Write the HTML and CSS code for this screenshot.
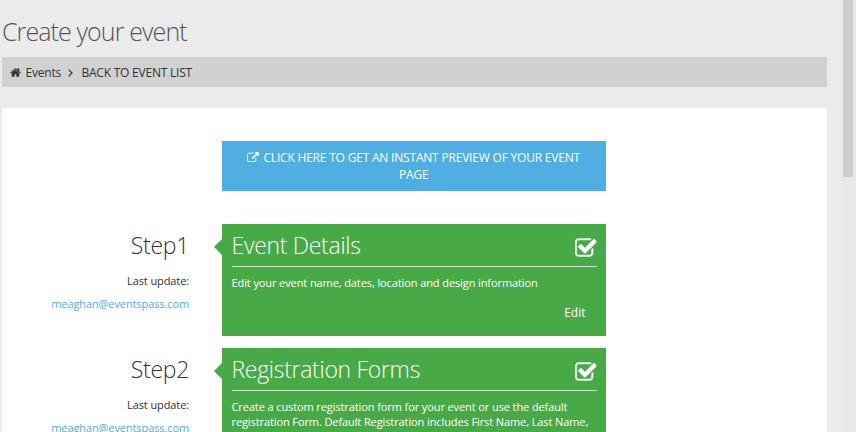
FILE: index.html
```html
<!DOCTYPE html>
<html lang="en">
<head>
<meta charset="utf-8">
<title>Create your event</title>
<link rel="stylesheet" href="styles.css">
</head>
<body>
<svg class="sprite" aria-hidden="true">
  <symbol id="home" viewBox="64 256 1664 1280"><path d="M1472 992v480q0 26-19 45t-45 19h-384v-384h-256v384h-384q-26 0-45-19t-19-45v-480q0-1 .5-3t.5-3l575-474 575 474q1 2 1 6zm223-69l-62 74q-8 9-21 11h-3q-13 0-21-7l-692-577-692 577q-12 8-24 7-13-2-21-11l-62-74q-8-10-7-23.5t11-21.5l719-599q32-26 76-26t76 26l244 204v-195q0-14 9-23t23-9h192q14 0 23 9t9 23v408l219 182q10 8 11 21.5t-7 23.5z"/></symbol>
  <symbol id="external" viewBox="0 0 1792 1536"><path d="M1408 928v320q0 119-84.500 203.500t-203.500 84.500h-832q-119 0-203.500-84.500t-84.500-203.500v-832q0-119 84.500-203.500t203.500-84.500h704q14 0 23 9t9 23v64q0 14-9 23t-23 9h-704q-66 0-113 47t-47 113v832q0 66 47 113t113 47h832q66 0 113-47t47-113v-320q0-14 9-23t23-9h64q14 0 23 9t9 23zm384-864v512q0 26-19 45t-45 19-45-19l-176-176-652 652q-10 10-23 10t-23-10l-114-114q-10-10-10-23t10-23l652-652-176-176q-19-19-19-45t19-45 45-19h512q26 0 45 19t19 45z"/></symbol>
  <symbol id="check" viewBox="64 128 1664 1408"><path d="M1472 930v318q0 119-84.500 203.500t-203.500 84.500h-832q-119 0-203.500-84.500t-84.500-203.500v-832q0-119 84.500-203.500t203.500-84.500h832q63 0 117 25 15 7 18 23 3 17-9 29l-49 49q-10 10-23 10-3 0-9-2-23-6-45-6h-832q-66 0-113 47t-47 113v832q0 66 47 113t113 47h832q66 0 113-47t47-113v-254q0-13 9-22l64-64q10-10 23-10 6 0 12 3 20 8 20 29zm231-489l-814 814q-24 24-57 24t-57-24l-430-430q-24-24-24-57t24-57l110-110q24-24 57-24t57 24l263 263 647-647q24-24 57-24t57 24l110 110q24 24 24 57t-24 57z"/></symbol>
</svg>
<div class="page">
  <main class="main">
    <h1 class="title">Create your event</h1>
    <nav class="crumbs">
      <svg class="home"><use href="#home"/></svg>
      <a class="crumb">Events</a>
      <svg class="angle" viewBox="0 0 5 8"><path d="M.7.7 4 4 .7 7.300"/></svg>
      <a class="crumb">BACK TO EVENT LIST</a>
    </nav>
    <section class="content">
      <a class="preview"><svg class="external"><use href="#external"/></svg>CLICK HERE TO GET AN INSTANT PREVIEW OF YOUR EVENT PAGE</a>
      <div class="step">
        <div class="meta">
          <h2 class="heading">Step1</h2>
          <p class="update">Last update:</p>
          <a class="mail">meaghan@eventspass.com</a>
        </div>
        <article class="card">
          <header class="card-head"><h2 class="heading">Event Details</h2><svg class="check"><use href="#check"/></svg></header>
          <p class="text">Edit your event name, dates, location and design information</p>
          <a class="edit">Edit</a>
        </article>
      </div>
      <div class="step">
        <div class="meta">
          <h2 class="heading">Step2</h2>
          <p class="update">Last update:</p>
          <a class="mail">meaghan@eventspass.com</a>
        </div>
        <article class="card">
          <header class="card-head"><h2 class="heading">Registration Forms</h2><svg class="check"><use href="#check"/></svg></header>
          <p class="text">Create a custom registration form for your event or use the default registration Form. Default Registration includes First Name, Last Name,</p>
        </article>
      </div>
    </section>
  </main>
  <div class="scroll"><div class="thumb"></div></div>
</div>
</body>
</html>
```
FILE: styles.css
```css
* { box-sizing: border-box; }
body {
  margin: 0;
  height: 432px;
  overflow: hidden;
  background: #ebebeb;
  color: #333;
  font: 13px/20px "Open Sans", sans-serif;
}
h1, h2, p { margin: 0; font-weight: 300; }
svg { fill: currentColor; flex: none; }
.sprite { display: none; }
.page { display: flex; justify-content: space-between; height: 432px; }
.main { width: 825px; margin-left: 2px; }
.title {
  height: 57px;
  padding-top: 13px;
  font-size: 25px;
  line-height: 36px;
  letter-spacing: -0.9px;
  color: #555;
}
.crumbs {
  display: flex;
  align-items: center;
  height: 30px;
  padding: 1px 0 0 8px;
  background: #d1d1d1;
  font-size: 12px;
  letter-spacing: -0.22px;
}
.home { width: 11px; height: 9px; margin-right: 4.5px; }
.angle {
  width: 5px;
  height: 8px;
  margin: 1px 8px 0 7.5px;
  fill: none;
  stroke: currentColor;
  stroke-width: 1.2;
}
.content {
  height: 345px;
  margin-top: 21px;
  padding-top: 33px;
  overflow: hidden;
  background: #fff;
}
.preview {
  display: block;
  width: 383.5px;
  height: 50px;
  margin: 0 0 33px 220px;
  padding: 8px 20px;
  background: #51aee3;
  color: #fff;
  font-size: 12px;
  line-height: 17px;
  letter-spacing: -0.2px;
  text-align: center;
}
.external { width: 12px; height: 10px; margin-right: 4px; }
.step { display: flex; gap: 33px; margin-bottom: 12px; }
.meta { width: 187px; padding-top: 5px; text-align: right; }
.heading { font-size: 23px; line-height: 32px; letter-spacing: -0.3px; }
.update { margin-top: 10px; font-size: 11px; font-weight: 400; letter-spacing: -0.1px; }
.mail {
  display: block;
  margin-top: 3px;
  color: #5aa9e0;
  font-size: 11px;
  letter-spacing: -0.1px;
}
.card {
  position: relative;
  width: 383.5px;
  height: 111.5px;
  margin-bottom: 0.5px;
  padding: 0 9px 0 9.5px;
  background: #48aa46;
  color: #fff;
}
.card::before {
  content: "";
  position: absolute;
  left: -8px;
  top: 15px;
  border: 8px solid transparent;
  border-left: 0;
  border-right-color: #48aa46;
}
.card-head {
  display: flex;
  justify-content: space-between;
  height: 43px;
  padding-top: 5px;
  border-bottom: 1px solid #c8e6c8;
}
.check { width: 21.5px; height: 19px; margin-top: 9px; stroke: currentColor; stroke-width: 30; }
.text {
  margin-top: 8px;
  font-size: 11px;
  font-weight: 400;
  line-height: 15px;
  letter-spacing: -0.1px;
}
.edit { display: block; margin: 13px 11px 0 0; font-size: 12px; text-align: right; }
.scroll { width: 13px; background: #e8e8e8; }
.thumb { width: 10px; height: 177px; background: #cdcdcd; }
```
